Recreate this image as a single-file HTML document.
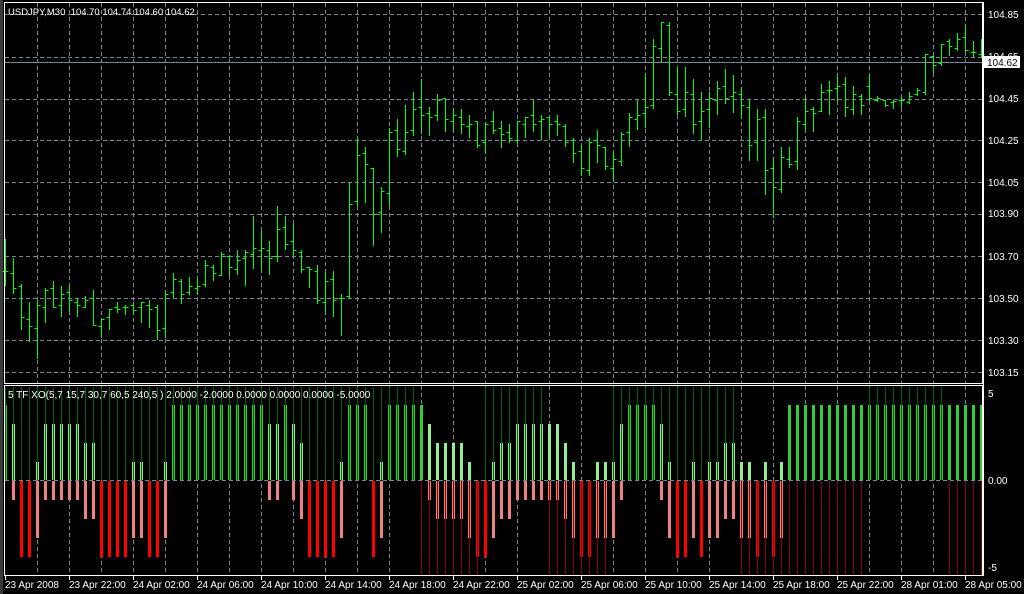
<!DOCTYPE html>
<html><head><meta charset="utf-8"><style>
html,body{margin:0;padding:0;background:#000;width:1024px;height:594px;overflow:hidden}
svg{display:block}
text{font-family:"Liberation Sans",sans-serif;fill:#fff;white-space:pre}
</style></head><body>
<svg id="s" width="1024" height="594" viewBox="0 0 1024 594" shape-rendering="crispEdges">
<rect width="1024" height="594" fill="#000"/>
<rect x="0" y="0" width="3" height="594" fill="#3a3a3a"/>
<g id="grid" stroke="#778899" stroke-width="1" stroke-dasharray="4,3" fill="none"></g>
<line x1="4" y1="62.5" x2="983" y2="62.5" stroke="#778899"/>
<g id="ind"></g>
<g id="bars" stroke="#00ff00" stroke-width="1" fill="none"></g>
<g fill="none" stroke="#fff">
<rect x="4.5" y="2.5" width="978" height="381"/>
<rect x="4.5" y="385.5" width="978" height="190"/>
</g>
<text x="8" y="15" font-size="9.5" xml:space="preserve">USDJPY,M30&#160; 104.70 104.74 104.60 104.62</text>
<text x="8" y="398" font-size="10">5 TF XO(5,7 15,7 30,7 60,5 240,5 ) 2.0000 -2.0000 0.0000 0.0000 0.0000 -5.0000</text>
<g font-size="10">
<text x="988" y="18">104.85</text>
<text x="988" y="60">104.65</text>
<text x="988" y="102">104.45</text>
<text x="988" y="144">104.25</text>
<text x="988" y="186">104.05</text>
<text x="988" y="217">103.90</text>
<text x="988" y="260">103.70</text>
<text x="988" y="302">103.50</text>
<text x="988" y="344">103.30</text>
<text x="988" y="376">103.15</text>
<rect x="984" y="56" width="36" height="12" fill="#fff"/>
<text x="987" y="66" style="fill:#000">104.62</text>
<text x="988" y="397">5</text>
<text x="988" y="484">0.00</text>
<text x="988" y="571">-5</text>
</g>
<g font-size="10" id="tl">
<text x="5" y="588">23 Apr 2008</text>
<text x="69" y="588">23 Apr 22:00</text>
<text x="133" y="588">24 Apr 02:00</text>
<text x="197" y="588">24 Apr 06:00</text>
<text x="261" y="588">24 Apr 10:00</text>
<text x="325" y="588">24 Apr 14:00</text>
<text x="389" y="588">24 Apr 18:00</text>
<text x="453" y="588">24 Apr 22:00</text>
<text x="517" y="588">25 Apr 02:00</text>
<text x="581" y="588">25 Apr 06:00</text>
<text x="645" y="588">25 Apr 10:00</text>
<text x="709" y="588">25 Apr 14:00</text>
<text x="773" y="588">25 Apr 18:00</text>
<text x="837" y="588">25 Apr 22:00</text>
<text x="901" y="588">28 Apr 01:00</text>
<text x="965" y="588">28 Apr 05:00</text>
</g>
<g id="ticks" stroke="#fff"></g>
<line x1="983.5" y1="2" x2="983.5" y2="576" stroke="#fff"/>
</svg>
<script>
var NS="http://www.w3.org/2000/svg";
function el(p,t,a){var e=document.createElementNS(NS,t);for(var k in a)e.setAttribute(k,a[k]);p.appendChild(e);return e;}
var g=document.getElementById('grid');
[14,57,99,140,182,214,256,298,340,372,480].forEach(function(y){el(g,'line',{x1:5,y1:y+.5,x2:983,y2:y+.5});});
for(var x=37;x<983;x+=32){el(g,'line',{x1:x+.5,y1:3,x2:x+.5,y2:383});el(g,'line',{x1:x+.5,y1:386,x2:x+.5,y2:575});}
var tk=document.getElementById('ticks');
for(var x=5;x<983;x+=64){el(tk,'line',{x1:x+.5,y1:576,x2:x+.5,y2:580});}
var D=[[239,285,271,271],[258,293,273,288],[284,329,286,317],[302,341,319,326],[300,358,328,305],[288,322,307,290],[281,307,288,307],[286,316,305,294],[285,310,292,300],[298,316,302,305],[296,307,307,300],[290,325,298,325],[319,337,326,319],[309,329,317,309],[302,312,307,309],[305,314,307,307],[302,312,305,310],[302,322,307,302],[300,327,305,309],[305,339,307,330],[291,337,328,294],[273,297,292,279],[279,303,281,294],[277,294,292,286],[278,294,288,286],[260,286,284,265],[265,280,267,273],[252,275,275,254],[255,275,256,267],[250,274,269,260],[250,285,258,252],
[216,268,254,248],[231,269,250,248],[241,274,250,258],[206,261,256,229],[216,249,227,244],[224,255,241,250],[250,272,252,269],[267,287,267,269],[265,303,271,300],[272,311,302,281],[271,316,279,300],[294,335,298,298],[182,297,296,204],[138,205,201,155],[147,202,153,164],[168,245,168,214],[187,232,212,191],[128,205,193,132],[119,156,130,149],[105,154,151,132],[92,135,130,109],[79,133,107,115],[107,135,113,117],[94,120,115,100],[98,131,98,119],[109,131,121,115],[109,133,117,124],[115,137,126,124],[121,147,121,145],[123,153,142,124],[111,133,121,130],
[121,147,128,134],[124,142,132,138],[121,142,140,121],[117,137,124,117],[100,131,115,124],[115,139,121,119],[117,137,117,124],[115,135,121,124],[124,146,126,142],[138,162,140,153],[145,175,151,168],[138,175,170,142],[130,162,140,145],[147,169,147,166],[152,181,168,159],[132,165,161,134],[113,146,132,117],[100,129,119,115],[74,127,113,107],[39,108,105,46],[22,61,48,22],[22,95,25,92],[68,114,94,111],[67,116,109,92],[79,133,94,124],[92,139,121,111],[92,127,109,98],[81,114,100,88],[69,103,86,98],[75,112,96,92],
[87,117,94,105],[100,160,107,145],[109,160,142,119],[109,194,117,170],[157,217,168,187],[147,192,189,157],[147,167,159,164],[117,169,161,121],[98,130,124,111],[107,131,109,113],[84,111,111,92],[81,114,90,90],[74,100,88,86],[77,116,84,107],[86,114,109,94],[94,114,96,105],[75,100,86,98],[96,101,100,98],[100,106,100,105],[100,108,102,101],[96,107,100,100],[92,103,102,96],[88,95,94,90],[54,94,92,54],[56,72,56,65],[44,65,63,44],[39,55,41,46],[33,50,48,39],[25,51,37,50],[41,56,52,52],[39,56,54,54]];
var b=document.getElementById('bars');
D.forEach(function(d,i){var x=5+8*i+.5;
el(b,'path',{d:'M'+x+' '+d[0]+'V'+(d[1]+1)+'M'+(x-3)+' '+(d[2]+.5)+'H'+x+'M'+x+' '+(d[3]+.5)+'H'+(x+3)});});
var P=[4,3,0,0,1,3,3,3,3,3,2,2,0,0,0,0,1,1,0,0,1,4,4,4,4,4,4,4,4,4,4,
4,4,3,3,4,3,2,0,0,0,0,1,4,4,4,0,1,4,4,4,4,4,3,2,2,2,2,1,0,0,
1,2,2,3,3,3,3,3,3,2,1,0,0,1,1,1,3,4,4,4,4,3,1,0,0,1,0,1,1,2,2,
1,1,0,1,0,1];
while(P.length<123)P.push(4);
var PY=[480,462,443,424,405],NY=[480,500,519,538,557];
function th(i){if(i<=51)return 'g';if(i<=59)return 'r';if(i<=67)return 'g';if(i<=75)return 'r';if(i<=91)return 'g';if(i<=107)return 'r';if(i<=117)return 'g';return 'r';}
var ind=document.getElementById('ind');
P.forEach(function(p,i){var x=5+8*i;var n=4-p;
if(p>0)el(ind,'rect',{x:x-1,y:PY[p],width:3,height:480-PY[p],fill:p==4?'#32cd32':'#90ee90'});
if(n>0)el(ind,'rect',{x:x-1,y:481,width:3,height:NY[n]-481,fill:n==4?'#ff0000':'#f08080'});
if(th(i)=='g')el(ind,'rect',{x:x,y:387,width:1,height:93,fill:'#006400'});
else el(ind,'rect',{x:x,y:481,width:1,height:94,fill:'#8b0000'});
});
</script>
</body></html>
